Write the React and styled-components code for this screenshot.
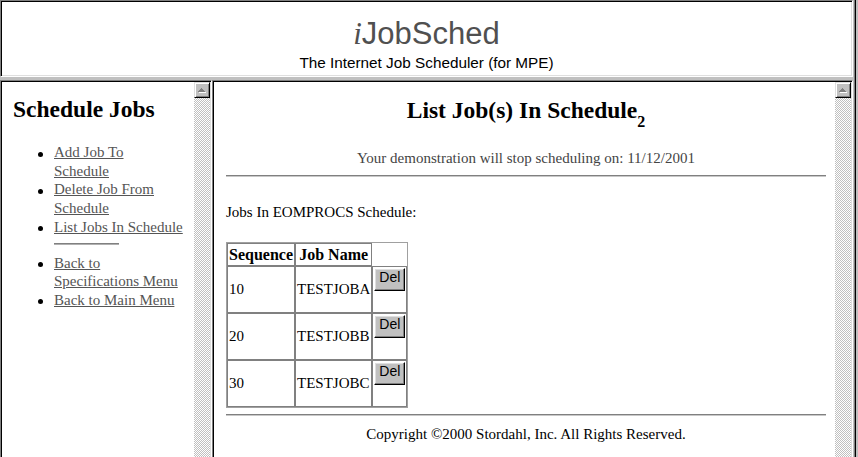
import React from 'react';
import styled, { createGlobalStyle } from 'styled-components';

const Global = createGlobalStyle`
  html, body { margin: 0; padding: 0; overflow: hidden; background: #c0c0c0; }
  body { font-family: "Liberation Serif", "Times New Roman", serif; color: #000; }
`;

const Screen = styled.div`
  display: flex;
  width: 858px;
  height: 457px;
  overflow: hidden;
  background: #c0c0c0;
`;

const Frameset = styled.div`
  flex: 0 0 853px;
  display: flex;
  flex-direction: column;
  gap: 3px;
`;

const WindowEdge = styled.div`
  flex: 1;
  background: linear-gradient(to right, #c0c0c0 0 1px, #808080 1px 2px, #000 2px 3px, #c0c0c0 3px);
`;

const Frame = styled.div`
  box-sizing: border-box;
  display: flex;
  background: #fff;
  border: 1px solid;
  border-color: #808080 #fff #fff #808080;
  padding: 1px;
  box-shadow: inset 1px 1px 0 #000, inset -1px -1px 0 #dfdfdf;
  width: ${(p) => p.$w || 'auto'};
  height: ${(p) => p.$h || 'auto'};
  flex: ${(p) => (p.$grow ? '1 1 auto' : '0 0 auto')};
`;

const FrameRow = styled.div`
  display: flex;
  height: 400px;
  flex: 0 0 auto;
`;

const Banner = styled.div`
  flex: 1;
  display: flex;
  flex-direction: column;
  align-items: center;
  padding-top: 14px;
`;

const Title = styled.h1`
  margin: 0;
  font-family: "Liberation Sans", Arial, sans-serif;
  font-weight: normal;
  font-size: 31px;
  line-height: 36px;
  color: #505050;
`;

const TitleI = styled.i`
  font-family: "Liberation Serif", "Times New Roman", serif;
`;

const Subtitle = styled.div`
  margin-top: 1px;
  font-family: "Liberation Sans", Arial, sans-serif;
  font-size: 15.3px;
  line-height: 19px;
`;

const FrameBody = styled.div`
  flex: 1;
  min-width: 0;
  padding: ${(p) => p.$pad};
`;

const Scrollbar = styled.div`
  flex: 0 0 16px;
  display: flex;
  flex-direction: column;
  background: repeating-conic-gradient(#c0c0c0 0% 25%, #ffffff 0% 50%) 0 0 / 2px 2px;
`;

const ScrollButton = styled.div`
  box-sizing: border-box;
  width: 16px;
  height: 16px;
  display: flex;
  align-items: center;
  justify-content: center;
  background: #c0c0c0;
  border: 1px solid;
  border-color: #dfdfdf #000 #000 #dfdfdf;
  box-shadow: inset 1px 1px 0 #fff, inset -1px -1px 0 #808080;
`;

const SideHeading = styled.h2`
  margin: 0;
  font-size: 23.5px;
  line-height: 27px;
  font-weight: bold;
`;

const NavList = styled.ul`
  list-style: none;
  margin: 20px 0 0;
  padding: 0 0 0 25px;
`;

const NavItem = styled.li`
  display: flex;
  align-items: flex-start;
  font-size: 15px;
  line-height: 18.7px;
`;

const Bullet = styled.span`
  flex: 0 0 5px;
  width: 5px;
  height: 5px;
  margin: 8.5px 11px 0 0;
  border-radius: 50%;
  background: #000;
`;

const NavLink = styled.a`
  color: #555;
  text-decoration: underline;
  white-space: nowrap;
`;

const NavDivider = styled.li`
  width: 65px;
  height: 0;
  margin: 6.7px 0 8.3px 16px;
  border-top: 1px solid #808080;
  border-bottom: 1px solid #b0b0b0;
`;

const PageTitle = styled.h2`
  margin: 0;
  text-align: center;
  font-size: 23.5px;
  line-height: 27px;
  font-weight: bold;
`;

const Sub = styled.sub`
  font-size: 16px;
  line-height: 0;
  vertical-align: -9px;
`;

const Notice = styled.p`
  margin: 25px 0 0;
  text-align: center;
  color: #444;
  font-size: 15px;
  line-height: 19px;
`;

const Rule = styled.hr`
  margin: ${(p) => p.$top}px 0 0;
  height: 0;
  border: none;
  border-top: 1px solid #808080;
  border-bottom: 1px solid #c8c8c8;
`;

const Lead = styled.p`
  margin: 26px 0 0;
  font-size: 15px;
  line-height: 19px;
`;

const JobTable = styled.table`
  margin-top: 20px;
  border-collapse: separate;
  border-spacing: 0;
  border: 1px solid #a0a0a0;
  empty-cells: hide;
`;

const HeadCell = styled.th`
  padding: 1px;
  border: 1px solid #808080;
  font-size: 16px;
  line-height: 19px;
  font-weight: bold;
`;

const Cell = styled.td`
  padding: 1px;
  border: 1px solid #808080;
  font-size: 15px;
  line-height: 19px;
  vertical-align: middle;
`;

const DelForm = styled.form`
  margin: 0 0 20px;
`;

const DelButton = styled.button`
  display: block;
  box-sizing: border-box;
  width: 31px;
  height: 23px;
  padding: 0 0 6px;
  font-family: "Liberation Sans", Arial, sans-serif;
  font-size: 14px;
  line-height: 14px;
  color: #000;
  background: #c0c0c0;
  border: 1px solid;
  border-color: #fff #000 #000 #fff;
  box-shadow: inset -1px -1px 0 #808080, inset 1px 1px 0 #dfdfdf;
  border-radius: 0;
`;

const Copyright = styled.p`
  margin: 9px 0 0;
  text-align: center;
  font-size: 15px;
  line-height: 19px;
`;

const UpArrow = () => (
  <svg width="8" height="5" viewBox="0 0 8 5" shapeRendering="crispEdges">
    <g fill="#fff">
      <rect x="4" y="1" width="1" height="1" />
      <rect x="3" y="2" width="3" height="1" />
      <rect x="2" y="3" width="5" height="1" />
      <rect x="1" y="4" width="7" height="1" />
    </g>
    <g fill="#808080">
      <rect x="3" y="0" width="1" height="1" />
      <rect x="2" y="1" width="3" height="1" />
      <rect x="1" y="2" width="5" height="1" />
      <rect x="0" y="3" width="7" height="1" />
    </g>
  </svg>
);

const ScrollTrack = () => (
  <Scrollbar>
    <ScrollButton>
      <UpArrow />
    </ScrollButton>
  </Scrollbar>
);

const navGroups = [
  [['Add Job To', 'Schedule'], ['Delete Job From', 'Schedule'], ['List Jobs In Schedule']],
  [['Back to', 'Specifications Menu'], ['Back to Main Menu']],
];

const jobs = [
  { seq: '10', name: 'TESTJOBA' },
  { seq: '20', name: 'TESTJOBB' },
  { seq: '30', name: 'TESTJOBC' },
];

const NavEntry = ({ lines }) => (
  <NavItem>
    <Bullet />
    <NavLink href="#">
      {lines.map((l, i) => (
        <React.Fragment key={i}>
          {i > 0 && <br />}
          {l}
        </React.Fragment>
      ))}
    </NavLink>
  </NavItem>
);

export default function App() {
  return (
    <>
      <Global />
      <Screen>
        <Frameset>
          <Frame $w="853px" $h="77px">
            <Banner>
              <Title>
                <TitleI>i</TitleI>JobSched
              </Title>
              <Subtitle>The Internet Job Scheduler (for MPE)</Subtitle>
            </Banner>
          </Frame>
          <FrameRow>
            <Frame $w="212px">
              <FrameBody $pad="14px 0 0 11px">
                <SideHeading>Schedule Jobs</SideHeading>
                <NavList>
                  {navGroups[0].map((lines, i) => (
                    <NavEntry key={i} lines={lines} />
                  ))}
                  <NavDivider />
                  {navGroups[1].map((lines, i) => (
                    <NavEntry key={i} lines={lines} />
                  ))}
                </NavList>
              </FrameBody>
              <ScrollTrack />
            </Frame>
            <Frame $grow>
              <FrameBody $pad="15px 9px 0 12px">
                <PageTitle>
                  List Job(s) In Schedule<Sub>2</Sub>
                </PageTitle>
                <Notice>Your demonstration will stop scheduling on: 11/12/2001</Notice>
                <Rule $top={7} />
                <Lead>Jobs In EOMPROCS Schedule:</Lead>
                <JobTable>
                  <thead>
                    <tr>
                      <HeadCell>Sequence</HeadCell>
                      <HeadCell>Job Name</HeadCell>
                      <HeadCell></HeadCell>
                    </tr>
                  </thead>
                  <tbody>
                    {jobs.map((j) => (
                      <tr key={j.seq}>
                        <Cell>{j.seq}</Cell>
                        <Cell>{j.name}</Cell>
                        <Cell>
                          <DelForm onSubmit={(e) => e.preventDefault()}>
                            <DelButton type="submit">Del</DelButton>
                          </DelForm>
                        </Cell>
                      </tr>
                    ))}
                  </tbody>
                </JobTable>
                <Rule $top={6} />
                <Copyright>Copyright ©2000 Stordahl, Inc. All Rights Reserved.</Copyright>
              </FrameBody>
              <ScrollTrack />
            </Frame>
          </FrameRow>
        </Frameset>
        <WindowEdge />
      </Screen>
    </>
  );
}
